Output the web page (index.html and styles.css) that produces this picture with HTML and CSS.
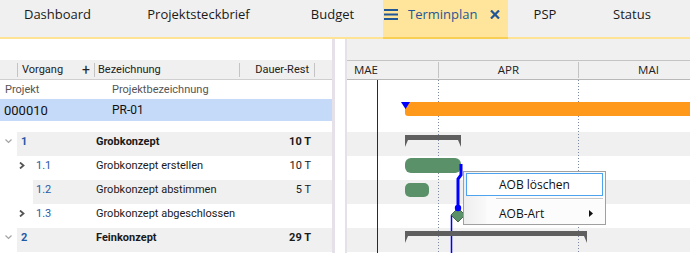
FILE: index.html
```html
<!DOCTYPE html>
<html lang="de">
<head>
  <meta charset="UTF-8">
  <title>Terminplan</title>
  <link rel="stylesheet" href="styles.css">
</head>
<body>

  <!-- Tab bar -->
  <div class="tabs">
    <div class="tab t-dash">Dashboard</div>
    <div class="tab t-steck">Projektsteckbrief</div>
    <div class="tab t-budget">Budget</div>
    <div class="tab active">
      <svg class="burger" width="14" height="12" viewBox="0 0 14 12">
        <rect x="0" y="0" width="14" height="2"/>
        <rect x="0" y="4.5" width="14" height="2"/>
        <rect x="0" y="9" width="14" height="2"/>
      </svg>
      <span class="tab-label">Terminplan</span>
      <svg class="close" width="10" height="9" viewBox="0 0 10 9">
        <path d="M1 0.5 L9 8.5 M9 0.5 L1 8.5"/>
      </svg>
    </div>
    <div class="tab t-psp">PSP</div>
    <div class="tab t-status">Status</div>
  </div>

  <div class="main">

    <!-- Left: task grid -->
    <div class="left">
      <div class="top-space"></div>
      <div class="ghead">
        <span class="hsep"></span>
        <span class="h-vorg">Vorgang</span>
        <span class="h-plus">+</span>
        <span class="hsep"></span>
        <span class="h-bez">Bezeichnung</span>
        <span class="hsep"></span>
        <span class="h-dauer">Dauer-Rest</span>
        <span class="hsep"></span>
      </div>
      <div class="proj-head">
        <span class="p-id">Projekt</span>
        <span>Projektbezeichnung</span>
      </div>
      <div class="proj-row">
        <span class="p-id big">000010</span>
        <span>PR-01</span>
      </div>
      <div class="gap"></div>

      <div class="row lvl1 alt">
        <span class="tog"><svg width="7" height="5" viewBox="0 0 7 5"><path class="chev-down" d="M0.5 0.5 L3.5 3.5 L6.5 0.5"/></svg></span>
        <div class="cells"><span class="num">1</span><span class="name">Grobkonzept</span><span class="dur">10 T</span></div>
      </div>
      <div class="row lvl2">
        <span class="tog"><svg width="6" height="7" viewBox="0 0 6 7"><path class="chev-right" d="M1 0.5 L4.5 3.5 L1 6.5"/></svg></span>
        <div class="cells"><span class="num">1.1</span><span class="name">Grobkonzept erstellen</span><span class="dur">10 T</span></div>
      </div>
      <div class="row lvl2 alt">
        <span class="tog"></span>
        <div class="cells"><span class="num">1.2</span><span class="name">Grobkonzept abstimmen</span><span class="dur">5 T</span></div>
      </div>
      <div class="row lvl2">
        <span class="tog"><svg width="6" height="7" viewBox="0 0 6 7"><path class="chev-right" d="M1 0.5 L4.5 3.5 L1 6.5"/></svg></span>
        <div class="cells"><span class="num">1.3</span><span class="name">Grobkonzept abgeschlossen</span><span class="dur"></span></div>
      </div>
      <div class="row lvl1 alt">
        <span class="tog"><svg width="7" height="5" viewBox="0 0 7 5"><path class="chev-down" d="M0.5 0.5 L3.5 3.5 L6.5 0.5"/></svg></span>
        <div class="cells"><span class="num">2</span><span class="name">Feinkonzept</span><span class="dur">29 T</span></div>
      </div>
    </div>

    <!-- Splitter -->
    <div class="splitter">
      <div class="split-bar"></div>
      <div class="split-gap"></div>
      <div class="split-bar"></div>
    </div>

    <!-- Right: gantt chart -->
    <div class="right">
      <div class="top-gray"></div>
      <div class="months">
        <div class="month m-first">MAE</div>
        <div class="month">APR</div>
        <div class="month">MAI</div>
      </div>
      <div class="chart">
        <div class="c-proj"></div>
        <div class="c-row alt"></div>
        <div class="c-row"></div>
        <div class="c-row alt"></div>
        <div class="c-row"></div>
        <div class="c-row alt"></div>

        <svg class="bars" width="343" height="173" viewBox="0 0 343 173">
          <line x1="91.5" y1="0" x2="91.5" y2="173" class="dots"/>
          <line x1="231.5" y1="0" x2="231.5" y2="173" class="dots"/>
          <line x1="30.5" y1="0" x2="30.5" y2="173" stroke="#8b0000" stroke-width="1"/>

          <path d="M61 22 H343 V36 H61 Q58 36 58 33 V22 Z" fill="#ff991c"/>
          <polygon points="54,22 63,22 58.5,29" fill="#0000ff"/>

          <path d="M58 55 H114 V67 L111 60 H61 L58 67 Z" fill="#5f5f5f"/>
          <rect x="58" y="78" width="56" height="15" rx="6" fill="#5a9168"/>
          <rect x="58" y="103" width="24" height="14" rx="5" fill="#5a9168"/>

          <line x1="104.5" y1="135" x2="104.5" y2="173" stroke="#0000ff" stroke-width="1.5"/>
          <polyline points="114,84 114,95 111,99 111,128" fill="none" stroke="#0000ff" stroke-width="3"/>
          <polygon points="111,128 118,135 111,142 104,135" fill="#5a9168" stroke="#2f4f38" stroke-width="0.8"/>
          <circle cx="111" cy="128" r="3.2" fill="#0000ff"/>

          <path d="M58 151 H240 V163 L237 156 H61 L58 163 Z" fill="#5f5f5f"/>
        </svg>
      </div>
    </div>

    <!-- Context menu over the chart -->
    <div class="ctx-menu">
      <div class="ctx-item hover">AOB löschen</div>
      <div class="ctx-sep"></div>
      <div class="ctx-item">
        <span>AOB-Art</span>
        <svg class="sub-arrow" width="4" height="7" viewBox="0 0 4 7"><polygon points="0,0 4,3.5 0,7"/></svg>
      </div>
    </div>

  </div>

</body>
</html>
```

FILE: styles.css
```css
* { box-sizing: border-box; }
body { margin: 0; width: 690px; height: 253px; overflow: hidden; background: #fff; font-family: Roboto, "Open Sans", sans-serif; color: #1a1a1a; }

/* tabs */
.tabs { display: flex; height: 39px; background: #f0f0f0; border-bottom: 2px solid #ffe394; font-family: "Open Sans", sans-serif; font-size: 13px; }
.tab { display: flex; justify-content: center; align-items: flex-start; padding-top: 4px; line-height: 20px; color: #1a1a1a; }
.t-dash { width: 115px; }
.t-steck { width: 167px; }
.t-budget { width: 101px; }
.t-psp { width: 74px; }
.t-status { width: 100px; }
.tab.active { width: 125px; background: #ffe49b; justify-content: flex-start; padding-left: 1px; margin-bottom: -2px; border-bottom: 2px solid #f8cf52; color: #1f5797; }
.burger { fill: #1f5797; margin-top: 5px; }
.tab-label { margin-left: 10px; }
.close { stroke: #1f5797; stroke-width: 2.2; margin-left: 12px; margin-top: 6px; }

/* main layout */
.main { position: relative; display: flex; height: 214px; }
.left { width: 332px; flex: none; font-size: 11px; }
.splitter { display: flex; width: 15px; flex: none; }
.split-bar { width: 3px; background: #e6e0e9; }
.split-gap { width: 10px; background: #fff; }
.split-bar + .split-gap + .split-bar { width: 2px; }
.right { flex: 1; overflow: hidden; }

/* grid header */
.top-space { height: 21px; }
.ghead { display: flex; align-items: center; height: 20px; background: #f0f0f0; border-bottom: 1px solid #cfcfcf; padding-left: 17px; color: #222; }
.hsep { width: 1px; height: 14px; background: #c4c4c4; flex: none; }
.h-vorg { width: 60px; padding-left: 4px; }
.h-plus { width: 16px; text-align: center; font-size: 14px; line-height: 14px; }
.h-bez { width: 144px; padding-left: 3px; }
.h-dauer { width: 74px; text-align: right; padding-right: 5px; }

.proj-head { display: flex; align-items: center; height: 19px; color: #555; }
.proj-row { display: flex; align-items: center; height: 22px; background: #c5d9f9; color: #111; font-size: 12px; }
.p-id { width: 112px; padding-left: 5px; }
.p-id.big { padding-left: 4px; font-size: 13px; }
.gap { height: 11px; }

/* task rows */
.row { display: flex; height: 24px; }
.tog { width: 17px; flex: none; display: flex; align-items: center; justify-content: center; padding-bottom: 5px; }
.lvl2 .tog { width: 33px; justify-content: flex-start; padding-left: 19px; }
.chev-down { fill: none; stroke: #a3a3a3; stroke-width: 1.2; }
.chev-right { fill: none; stroke: #555; stroke-width: 1.8; }
.cells { flex: 1; display: flex; align-items: center; padding-bottom: 5px; }
.row.alt .cells { background: #f0f0f0; }
.num { color: #1f5aa6; }
.lvl1 .num { width: 79px; padding-left: 4px; font-weight: bold; }
.lvl2 .num { width: 63px; padding-left: 3px; }
.name { flex: 1; }
.lvl1 .name { font-weight: bold; }
.dur { width: 60px; text-align: right; margin-right: 21px; }
.lvl1 .dur { font-weight: bold; }

/* chart */
.top-gray { height: 21px; background: #f0f0f0; }
.months { display: flex; height: 20px; background: #f0f0f0; border-top: 1px solid #c4c4c4; border-bottom: 1px solid #b8b8b8; font-family: "Open Sans", sans-serif; font-size: 11.5px; color: #222; }
.month { width: 140px; flex: none; text-align: center; border-left: 1px solid #c4c4c4; margin: 1px 0; line-height: 16px; }
.month.m-first { width: 91px; text-align: left; padding-left: 7px; border-left: none; }
.chart { position: relative; height: 173px; }
.c-proj { height: 52px; }
.c-row { height: 24px; }
.c-row.alt { background: #f0f0f0; }
.bars { position: absolute; left: 0; top: 0; }
.dots { stroke: #7b8aa0; stroke-width: 1; stroke-dasharray: 1 2; }

/* context menu */
.ctx-menu { position: absolute; left: 463px; top: 132px; width: 143px; height: 54px; background: #fcfcfc; border: 1px solid #a0a0a0; padding: 1px 2px; font-family: "Open Sans", sans-serif; font-size: 12px; color: #111;
  background-image: linear-gradient(to right, #eeeeee, #f9f9f9 22px, #fcfcfc 23px); }
.ctx-item { display: flex; align-items: center; height: 23px; padding-left: 33px; padding-right: 10px; }
.ctx-item span { flex: 1; }
.ctx-item.hover { background: #fff; border: 1px solid #4ea3ee; padding-left: 32px; }
.ctx-sep { height: 2px; margin: 2px 0 2px 30px; border-top: 1px solid #c8c8c8; border-bottom: 1px solid #fff; }
.sub-arrow { fill: #111; }
```
